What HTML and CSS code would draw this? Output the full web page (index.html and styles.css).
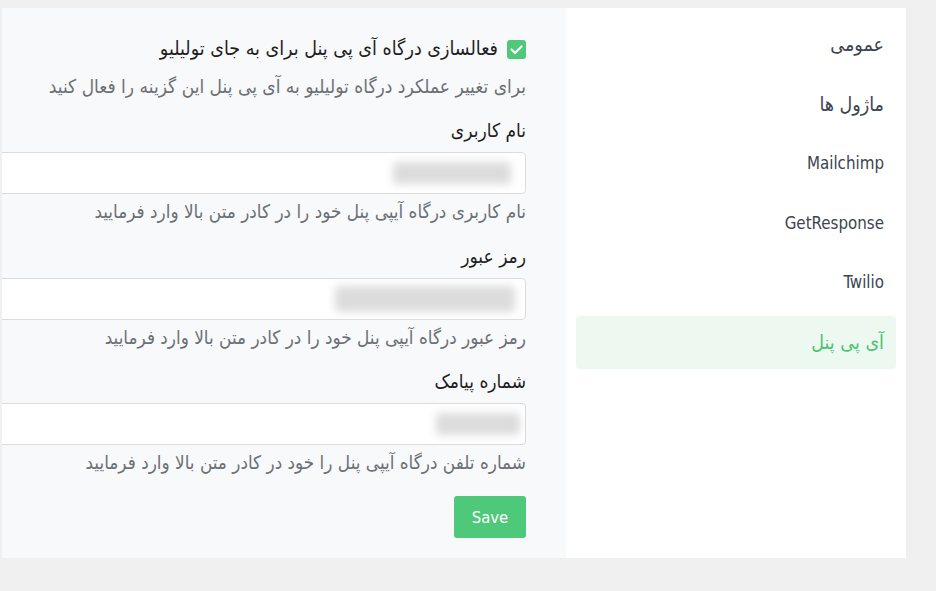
FILE: index.html
```html
<!DOCTYPE html>
<html lang="fa" dir="rtl">
<head>
<meta charset="utf-8">
<title>تنظیمات</title>
<link rel="stylesheet" href="styles.css">
</head>
<body>
<div class="wrap">
  <nav class="sidebar">
    <div class="nav-item fa">عمومی</div>
    <div class="nav-item fa">ماژول ها</div>
    <div class="nav-item">Mailchimp</div>
    <div class="nav-item">GetResponse</div>
    <div class="nav-item">Twilio</div>
    <div class="nav-item fa active">آی پی پنل</div>
  </nav>
  <main class="panel">
    <div class="check-row">
      <span class="checkbox"><svg width="19" height="19" viewBox="0 0 19 19"><polyline points="4.5,9.5 8,13 14.5,6.5" fill="none" stroke="#fff" stroke-width="2.2" stroke-linecap="round" stroke-linejoin="round"/></svg></span>
      <span class="check-label">فعالسازی درگاه آی پی پنل برای به جای تولیلیو</span>
    </div>
    <p class="desc">برای تغییر عملکرد درگاه تولیلیو به آی پی پنل این گزینه را فعال کنید</p>

    <div class="group">
      <div class="label">نام کاربری</div>
      <div class="input"><span class="blur b1"></span></div>
      <div class="help">نام کاربری درگاه آیپی پنل خود را در کادر متن بالا وارد فرمایید</div>
    </div>
    <div class="group">
      <div class="label">رمز عبور</div>
      <div class="input"><span class="blur b2"></span></div>
      <div class="help">رمز عبور درگاه آیپی پنل خود را در کادر متن بالا وارد فرمایید</div>
    </div>
    <div class="group">
      <div class="label">شماره پیامک</div>
      <div class="input"><span class="blur b3"></span></div>
      <div class="help">شماره تلفن درگاه آیپی پنل را خود در کادر متن بالا وارد فرمایید</div>
    </div>
    <button class="save">Save</button>
  </main>
</div>
</body>
</html>
```
FILE: styles.css
```css
* { box-sizing: border-box; }
html, body { margin: 0; padding: 0; }
body {
  background: #f0f0f0;
  font-family: "DejaVu Sans Condensed", "DejaVu Sans", sans-serif;
  font-size: 19px;
  color: #2b2b2b;
  width: 936px;
  height: 591px;
  overflow: hidden;
}
.wrap {
  display: flex;
  align-items: stretch;
  padding: 8px 30px 0 0;
}
.sidebar {
  width: 340px;
  flex: none;
  background: #fff;
  padding: 10px;
  display: flex;
  flex-direction: column;
  gap: 6.5px;
}
.nav-item {
  height: 53px;
  line-height: 53px;
  padding: 0 12px;
  font-size: 16.8px;
  color: #3b4450;
  border-radius: 4px;
}
.nav-item.fa {
  font-size: 19.5px;
}
.nav-item.active {
  background: #edf8f0;
  color: #4cc472;
}
.panel {
  flex: 1;
  min-width: 0;
  margin-left: 2px;
  background: #f8f9fb;
  padding: 30px 40px 20px 0;
  overflow: hidden;
}
.check-row {
  display: flex;
  align-items: center;
  gap: 9px;
  height: 22px;
}
.checkbox {
  width: 19px;
  height: 19px;
  border-radius: 3px;
  background: #4fc878;
  flex: none;
  display: flex;
}
.check-label {
  font-size: 19.5px;
  line-height: 22px;
  color: #1e1e1e;
}
.desc {
  margin: 15px 0 0;
  line-height: 22px;
  color: #6c7075;
  font-size: 19px;
}
.group { margin-top: 22px; }
.group + .group { margin-top: 21.5px; }
.label {
  line-height: 22px;
  color: #1e1e1e;
  font-size: 19px;
}
.input {
  margin-top: 11px;
  margin-left: -30px;
  height: 42px;
  background: #fff;
  border: 1px solid #dcdcde;
  border-radius: 4px;
  position: relative;
  overflow: hidden;
}
.blur {
  position: absolute;
  background: #dcdcdc;
  filter: blur(4px);
  border-radius: 4px;
}
.b1 { right: 14px; top: 9px; width: 118px; height: 22px; }
.b2 { right: 10px; top: 7px; width: 180px; height: 26px; }
.b3 { right: 5px; top: 9px; width: 84px; height: 22px; }
.help {
  margin-top: 7px;
  line-height: 22px;
  color: #6c7075;
  font-size: 18.8px;
}
.save {
  display: block;
  margin-top: 22px;
  width: 72px;
  height: 42px;
  border: 0;
  border-radius: 3px;
  background: #4ec879;
  color: #fff;
  font-family: "DejaVu Sans Condensed", "DejaVu Sans", sans-serif;
  font-size: 16.5px;
  padding: 0;
}
```
